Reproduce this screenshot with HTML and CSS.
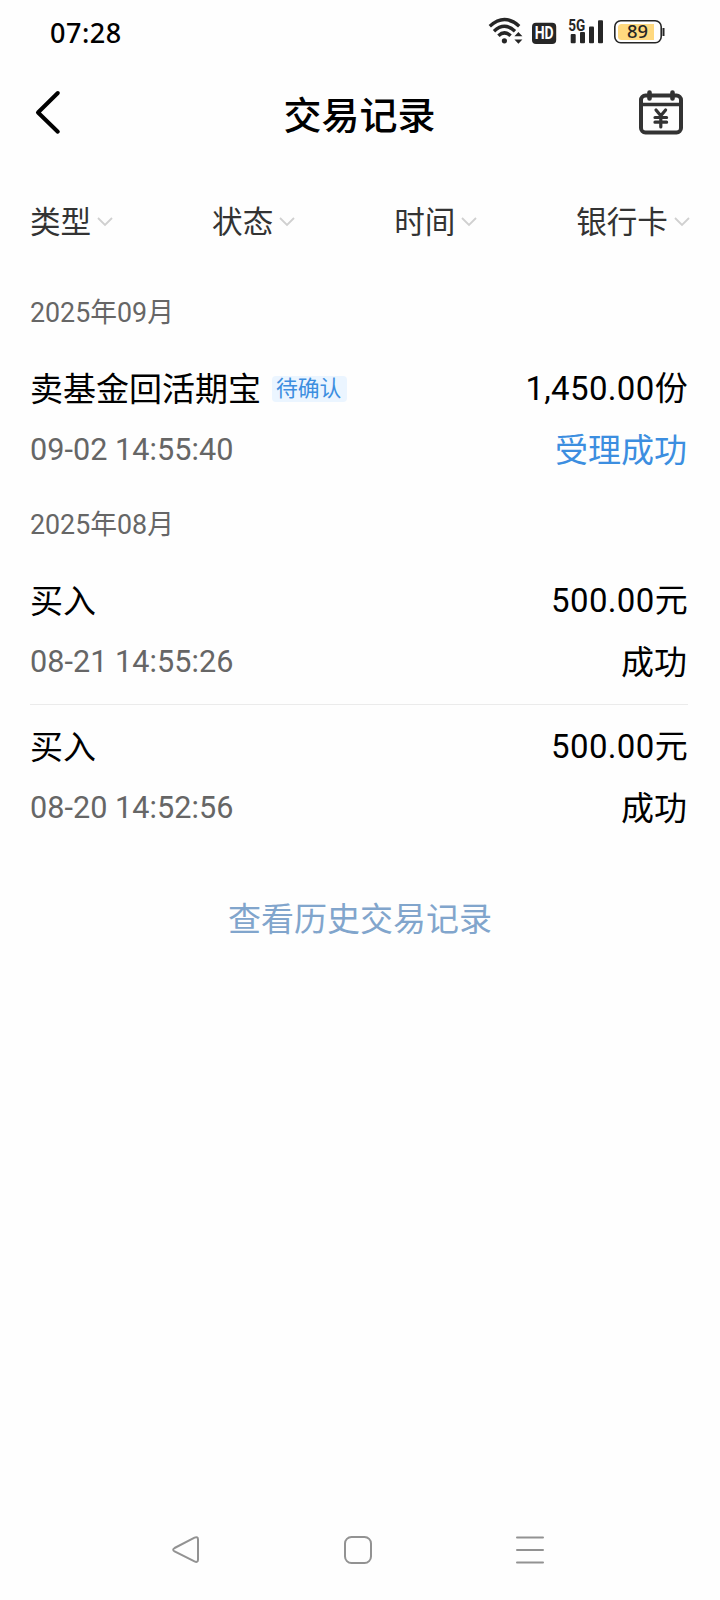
FILE: index.html
```html
<!DOCTYPE html>
<html lang="zh-CN">
<head>
    <meta charset="UTF-8">
    <meta name="viewport" content="width=device-width, initial-scale=1.0">
    <title>交易记录</title>
    <link rel="stylesheet" href="styles.css">
</head>
<body>
    <div class="screen">
        <div class="status-bar">
            <span class="clock">07:28</span>
            <svg class="status-icons" width="200" height="34" viewBox="0 0 200 34">
                <!-- wifi -->
                <g fill="none" stroke="#262626" stroke-width="3.4">
                    <path d="M9.8 12.2Q24.5 -1.2 39.2 12.2"/>
                    <path d="M14 17.2Q24.5 7.4 35 17.2"/>
                    <path d="M18.4 21.8Q24.5 16 30.6 21.8"/>
                </g>
                <circle cx="24.4" cy="26.8" r="2.6" fill="#262626"/>
                <path d="M34.4 22.3L38.4 18L42.4 22.3ZM34.4 25.4L38.4 29.8L42.4 25.4Z" fill="#262626"/>
                <!-- HD -->
                <rect x="52" y="8.7" width="24.2" height="21.3" rx="4" fill="#262626"/>
                <text class="hd-text" x="64.2" y="25.3" text-anchor="middle" textLength="19" lengthAdjust="spacingAndGlyphs">HD</text>
                <!-- signal -->
                <g fill="#262626">
                    <rect x="90.7" y="20" width="5" height="9.3" rx="1"/>
                    <rect x="100" y="18" width="5" height="11.3" rx="1"/>
                    <rect x="109" y="12.5" width="5" height="16.8" rx="1"/>
                    <rect x="118" y="6.3" width="5" height="23" rx="1"/>
                </g>
                <text class="net-text" x="88.3" y="16.6" textLength="17" lengthAdjust="spacingAndGlyphs">5G</text>
                <!-- battery -->
                <rect x="134.8" y="6.8" width="46.4" height="22" rx="6" fill="#fff" stroke="#262626" stroke-width="1.6"/>
                <path d="M141.5 10H174V26H141.5Q138 26 138 22.5V13.5Q138 10 141.5 10Z" fill="#ffd97f"/>
                <path d="M183.5 14V22" stroke="#262626" stroke-width="2"/>
                <text class="battery-text" x="157.6" y="23.8" text-anchor="middle" textLength="21" lengthAdjust="spacingAndGlyphs">89</text>
            </svg>
        </div>

        <div class="header">
            <svg class="back" width="30" height="48" viewBox="0 0 30 48">
                <path d="M22.8 5L3 24.5L22.8 43.7" fill="none" stroke="#000" stroke-width="4" stroke-linecap="round" stroke-linejoin="round"/>
            </svg>
            <h1 class="title">交易记录</h1>
            <svg class="calendar" width="48" height="48" viewBox="0 0 48 48">
                <g fill="none" stroke="#333" stroke-width="4" stroke-linecap="round" stroke-linejoin="round">
                    <rect x="5" y="7.5" width="40" height="37" rx="4.5"/>
                    <path d="M5 16.5H45" stroke-width="3.6"/>
                    <path d="M13.5 4.5V10.5M36.5 4.5V10.5" stroke-width="4.6"/>
                    <path d="M20 22L24.8 27.8L29.6 22M24.8 27.8V39M19 29.5H30.6M19 34.2H30.6" stroke-width="3.2"/>
                </g>
            </svg>
        </div>

        <div class="filters">
            <div class="filter">类型<svg class="arrow" width="16" height="10" viewBox="0 0 16 10"><path d="M1 1L8 8L15 1"/></svg></div>
            <div class="filter">状态<svg class="arrow" width="16" height="10" viewBox="0 0 16 10"><path d="M1 1L8 8L15 1"/></svg></div>
            <div class="filter">时间<svg class="arrow" width="16" height="10" viewBox="0 0 16 10"><path d="M1 1L8 8L15 1"/></svg></div>
            <div class="filter">银行卡<svg class="arrow" width="16" height="10" viewBox="0 0 16 10"><path d="M1 1L8 8L15 1"/></svg></div>
        </div>

        <div class="records">
            <div class="month">2025年09月</div>
            <div class="record">
                <div class="line">
                    <span class="name">卖基金回活期宝</span>
                    <span class="tag">待确认</span>
                    <span class="amount">1,450.00份</span>
                </div>
                <div class="line">
                    <span class="date">09-02 14:55:40</span>
                    <span class="state pending">受理成功</span>
                </div>
            </div>

            <div class="month">2025年08月</div>
            <div class="record bordered">
                <div class="line">
                    <span class="name">买入</span>
                    <span class="amount">500.00元</span>
                </div>
                <div class="line">
                    <span class="date">08-21 14:55:26</span>
                    <span class="state">成功</span>
                </div>
            </div>
            <div class="record">
                <div class="line">
                    <span class="name">买入</span>
                    <span class="amount">500.00元</span>
                </div>
                <div class="line">
                    <span class="date">08-20 14:52:56</span>
                    <span class="state">成功</span>
                </div>
            </div>
        </div>

        <div class="history">查看历史交易记录</div>

        <div class="nav-bar">
            <svg width="28" height="28" viewBox="0 0 28 28"><path d="M2.6 12L22.5 1.6Q26 0.3 26 3.5V23.5Q26 27 22.5 25.4L2.6 15.5Q-0.2 13.7 2.6 12Z"/></svg>
            <svg width="28" height="28" viewBox="0 0 28 28"><rect x="1" y="1" width="26" height="26" rx="6.5"/></svg>
            <svg width="28" height="28" viewBox="0 0 28 28"><path d="M1 1.5H27M1 14H27M1 26.5H27" stroke-linecap="round"/></svg>
        </div>
    </div>
</body>
</html>
```

FILE: styles.css
```css
* {
    box-sizing: border-box;
}
body {
    margin: 0;
    background: #fefefe;
    color: #000;
    font-family: Roboto, "Noto Sans CJK SC", sans-serif;
}
.screen {
    display: flex;
    flex-direction: column;
    width: 720px;
    height: 1600px;
}
.status-bar {
    display: flex;
    justify-content: space-between;
    height: 64px;
    padding: 14px 40px 0 50px;
}
.clock {
    font-family: "Noto Sans", sans-serif;
    font-size: 27px;
    font-weight: 500;
    line-height: 37px;
    letter-spacing: 0.5px;
}
.hd-text {
    font-size: 17.5px;
    font-weight: 700;
    fill: #fff;
}
.net-text {
    font-size: 16.5px;
    font-weight: 700;
    fill: #262626;
    stroke: #fefefe;
    stroke-width: 2px;
    paint-order: stroke;
}
.battery-text {
    font-family: "Noto Sans", sans-serif;
    font-size: 18px;
    font-weight: 500;
    fill: #262626;
}
.header {
    display: flex;
    align-items: center;
    justify-content: space-between;
    height: 96px;
    padding: 0 36px 0 35px;
}
.title {
    margin: 0 0 0 18px;
    padding-top: 7px;
    font-size: 38px;
    font-weight: 500;
    line-height: 60px;
}
.filters {
    display: flex;
    justify-content: space-between;
    height: 120px;
    padding: 30px 30px 0 30px;
}
.filter {
    display: flex;
    align-items: center;
    height: 60px;
    font-size: 30.6px;
    color: #333;
}
.arrow {
    margin: 4px 0 0 6px;
    fill: none;
    stroke: #d0d0d0;
    stroke-width: 1.8;
}
.records {
    padding: 0 32px 0 30px;
}
.month {
    font-size: 26.8px;
    line-height: 67px;
    height: 66px;
    color: #666;
}
.record {
    height: 146px;
    padding: 12px 0;
}
.bordered {
    height: 147px;
    margin-bottom: -1px;
    border-bottom: 1px solid #ebebeb;
}
.line {
    display: flex;
    align-items: center;
    height: 61px;
    font-size: 33px;
    line-height: 61px;
}
.name,
.state {
    padding-top: 2px;
}
.tag {
    height: 26px;
    margin-left: 11px;
    padding: 0 6px 0 4px;
    border-radius: 4px;
    background: #ebf5ff;
    color: #3c8ee0;
    font-size: 21.8px;
    line-height: 26px;
}
.date {
    font-size: 30.6px;
    letter-spacing: 0.05px;
    color: #666;
}
.amount {
    margin-left: auto;
    letter-spacing: 0.35px;
}
.state {
    margin-left: auto;
    padding-right: 1px;
}
.pending {
    color: #3c8ee0;
}
.history {
    height: 136px;
    text-align: center;
    font-size: 33px;
    line-height: 139px;
    color: #81a5cc;
}
.nav-bar {
    display: flex;
    justify-content: space-between;
    margin-top: auto;
    padding: 0 176px 36px 172px;
}
.nav-bar svg {
    fill: none;
    stroke: #929292;
    stroke-width: 2;
}
```
